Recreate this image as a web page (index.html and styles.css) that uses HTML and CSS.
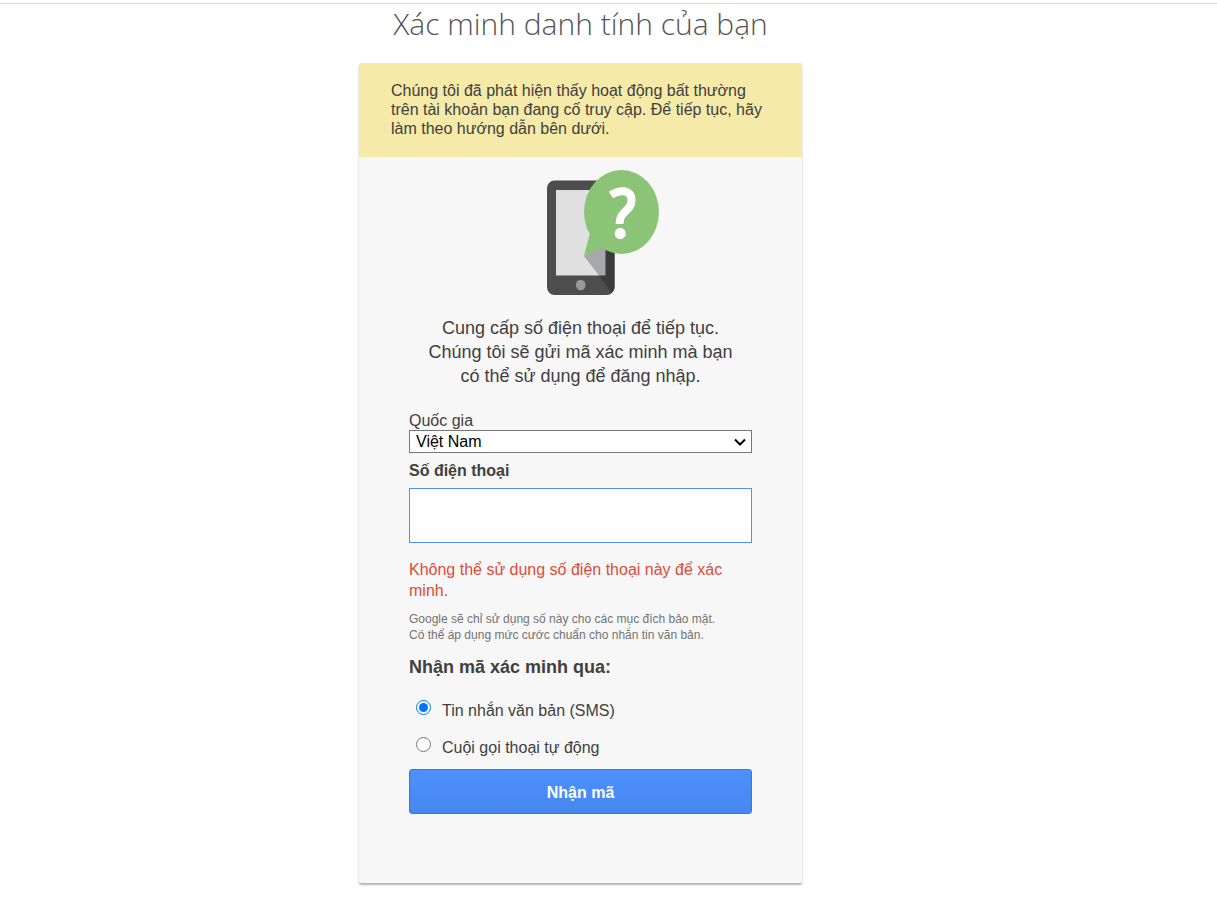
FILE: index.html
```html
<!DOCTYPE html>
<html lang="vi">
<head>
  <meta charset="UTF-8">
  <meta name="viewport" content="width=device-width, initial-scale=1.0">
  <title>Xác minh danh tính của bạn</title>
  <link rel="stylesheet" href="styles.css">
</head>
<body>

  <main class="wrapper">
    <h1>Xác minh danh tính của bạn</h1>

    <div class="card">
      <p class="notice">Chúng tôi đã phát hiện thấy hoạt động bất thường trên tài khoản bạn đang cố truy cập. Để tiếp tục, hãy làm theo hướng dẫn bên dưới.</p>

      <form class="challenge" method="POST" action="#">
        <svg class="phone-icon" width="156" height="125" viewBox="-44 0 156 125" aria-hidden="true">
          <rect x="0" y="10.5" width="67.5" height="114.5" rx="7.5" fill="#4d4d4d"/>
          <rect x="9" y="20" width="49.5" height="85.5" fill="#e0e0e0"/>
          <!-- shadow of the bubble -->
          <path d="M37 86 L54 77 L58.5 79 V105.5 H52 Z" fill="#a6a8ab"/>
          <path d="M58.5 79 L67.5 82 V117.5 Q67.5 119.5 64.5 122.5 L52 105.5 H58.5 Z" fill="#3b3b3b"/>
          <ellipse cx="33.7" cy="115" rx="4.8" ry="5.3" fill="#999"/>
          <ellipse cx="74.5" cy="42" rx="37.5" ry="42" fill="#8bc476"/>
          <path d="M43 63 L37 86 L58 76 Z" fill="#8bc476"/>
          <path d="M64 25 C72 19.500 84.500 19 84.500 30 C84.500 42 72.500 40 72.500 54" fill="none" stroke="#fff" stroke-width="8"/>
          <ellipse cx="73.200" cy="63.500" rx="5.500" ry="5.700" fill="#fff"/>
        </svg>

        <p class="intro">Cung cấp số điện thoại để tiếp tục. Chúng tôi sẽ gửi mã xác minh mà bạn có thể sử dụng để đăng nhập.</p>

        <label class="country-label" for="country">Quốc gia</label>
        <div class="select-box">
          <select id="country" name="country">
            <option selected>Việt Nam</option>
          </select>
          <svg class="arrow" width="12" height="8" viewBox="0 0 12 8" aria-hidden="true">
            <path d="M1 1.500 L6 6.500 L11 1.500" fill="none" stroke="#000" stroke-width="2"/>
          </svg>
        </div>

        <label class="phone-label" for="phone">Số điện thoại</label>
        <input class="phone-input" type="tel" id="phone" name="phone">

        <p class="error">Không thể sử dụng số điện thoại này để xác minh.</p>
        <p class="hint">Google sẽ chỉ sử dụng số này cho các mục đích bảo mật.<br>Có thể áp dụng mức cước chuẩn cho nhắn tin văn bản.</p>

        <fieldset>
          <legend>Nhận mã xác minh qua:</legend>
          <div class="option">
            <input type="radio" id="sms" name="method" value="sms" checked>
            <label for="sms">Tin nhắn văn bản (SMS)</label>
          </div>
          <div class="option">
            <input type="radio" id="call" name="method" value="call">
            <label for="call">Cuội gọi thoại tự động</label>
          </div>
        </fieldset>

        <button type="submit">Nhận mã</button>
      </form>
    </div>
  </main>

</body>
</html>
```
FILE: styles.css
```css
* {
  box-sizing: border-box;
}

body {
  margin: 3px 0 0;
  border-top: 1px solid #dcdcdc;
  background-color: #fff;
  color: #404040;
  font-family: "Liberation Sans", Arial, sans-serif;
  font-size: 16px;
}

p {
  margin: 0;
}

.wrapper {
  padding: 0 56px 40px 0;
}

h1 {
  margin: 0 0 19px;
  color: #555;
  font-family: "Open Sans", sans-serif;
  font-size: 30px;
  font-weight: 300;
  line-height: 40px;
  text-align: center;
}

.card {
  max-width: 443px;
  margin: 0 auto;
  background-color: #f7f7f7;
  border-radius: 2px;
  box-shadow: 0 2px 2px rgba(0, 0, 0, 0.3);
}

.notice {
  padding: 18px 32px 19px;
  background-color: #f6eaa8;
  border-radius: 2px 2px 0 0;
  line-height: 19px;
}

.challenge {
  padding: 13px 50px 69px;
}

.phone-icon {
  display: block;
  margin: 0 auto 21px;
}

.intro {
  max-width: 310px;
  margin: 0 auto 24px;
  font-size: 18px;
  line-height: 24px;
  text-align: center;
}

.country-label,
.phone-label {
  display: block;
}

.select-box {
  position: relative;
}

select {
  display: block;
  width: 100%;
  height: 23px;
  padding: 0 24px 0 6px;
  border: 1px solid #767676;
  border-radius: 0;
  background-color: #fff;
  color: #000;
  font-family: inherit;
  font-size: 16px;
  -webkit-appearance: none;
  appearance: none;
}

.arrow {
  position: absolute;
  top: 8px;
  right: 6px;
  pointer-events: none;
}

.phone-label {
  margin: 9px 0 8px;
  font-weight: bold;
}

.phone-input {
  display: block;
  width: 100%;
  height: 55px;
  padding: 0 8px;
  border: 1px solid #4d90fe;
  border-radius: 0;
  outline: none;
  font-size: 16px;
  -webkit-appearance: none;
  appearance: none;
}

.error {
  margin: 16px 0 10px;
  color: #dd4b39;
  line-height: 21px;
}

.hint {
  color: #737373;
  font-size: 12px;
  line-height: 16px;
}

fieldset {
  margin: 12px 0 5px;
  padding: 0;
  border: none;
}

legend {
  margin-bottom: 11px;
  padding: 0;
  font-size: 18px;
  font-weight: bold;
  line-height: 24px;
}

.option {
  display: flex;
  align-items: flex-start;
  padding: 10px 0 5px 7px;
}

.option input {
  width: 15px;
  height: 15px;
  margin: 0 11px 0 0;
}

.option label {
  line-height: 22px;
}

button {
  display: block;
  width: 100%;
  height: 45px;
  padding: 2px 0 0;
  border: 1px solid #3079ed;
  border-radius: 3px;
  background-image: linear-gradient(#4d90fe, #4787ed);
  color: #fff;
  font-family: inherit;
  font-size: 16px;
  font-weight: bold;
  cursor: pointer;
}

button:hover {
  background-image: linear-gradient(#4d90fe, #357ae8);
}
```
